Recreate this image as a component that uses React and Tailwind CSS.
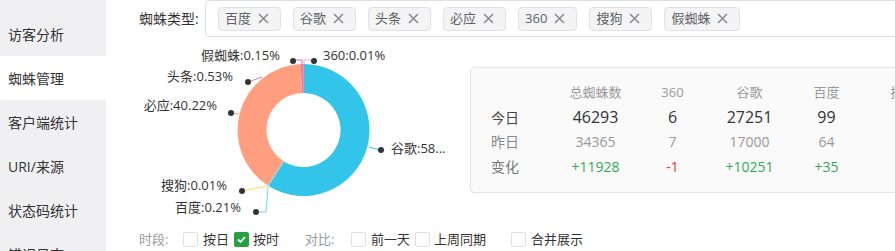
import React from "react";

const FONT = "font-['Open_Sans','Noto_Sans_CJK_SC',sans-serif]";

const navItems = ["访客分析", "蜘蛛管理", "客户端统计", "URI/来源", "状态码统计", "错误日志"];
const tags = ["百度", "谷歌", "头条", "必应", "360", "搜狗", "假蜘蛛"];

const slices = [
  { name: "360", v: 6, c: "#e690d1" },
  { name: "谷歌", v: 27251, c: "#32c5e9" },
  { name: "百度", v: 99, c: "#67e0e3" },
  { name: "搜狗", v: 4, c: "#ffdb5c" },
  { name: "必应", v: 18619, c: "#ff9f7f" },
  { name: "头条", v: 245, c: "#fb7293" },
  { name: "假蜘蛛", v: 69, c: "#e062ae" },
];

const CX = 303.5;
const CY = 130;
const RO = 66;
const RI = 37;

function pt(r, a) {
  return [CX + r * Math.sin(a), CY - r * Math.cos(a)];
}

function arcPath(a0, a1) {
  const large = a1 - a0 > Math.PI ? 1 : 0;
  const [x0, y0] = pt(RO, a0);
  const [x1, y1] = pt(RO, a1);
  const [x2, y2] = pt(RI, a1);
  const [x3, y3] = pt(RI, a0);
  return `M${x0} ${y0} A${RO} ${RO} 0 ${large} 1 ${x1} ${y1} L${x2} ${y2} A${RI} ${RI} 0 ${large} 0 ${x3} ${y3} Z`;
}

function Donut() {
  const total = slices.reduce((s, d) => s + d.v, 0);
  let acc = 0;
  const paths = slices.map((d) => {
    const a0 = (acc / total) * Math.PI * 2;
    acc += d.v;
    const a1 = (acc / total) * Math.PI * 2;
    return <path key={d.name} d={arcPath(a0, a1)} fill={d.c} />;
  });
  const dot = (x, y) => <circle cx={x} cy={y} r="3" fill="#333" />;
  return (
    <svg width="340" height="190" viewBox="130 37 340 190" className="block shrink-0">
      {paths}
      {/* label lines */}
      <polyline points="304,64 304,60 314,60" fill="none" stroke="#d9b3e6" strokeWidth="1" />
      <polyline points="302,64 302,60 293,60" fill="none" stroke="#e062ae" strokeWidth="1" />
      <polyline points="262,77 248,82" fill="none" stroke="#fb7293" strokeWidth="1" />
      <polyline points="239,114 231,113" fill="none" stroke="#ff9f7f" strokeWidth="1" />
      <polyline points="268,186 242,191" fill="none" stroke="#ffdb5c" strokeWidth="1" />
      <polyline points="268,187 266,212 256,212" fill="none" stroke="#67e0e3" strokeWidth="1" />
      <polyline points="369,147 376,149 381,150" fill="none" stroke="#32c5e9" strokeWidth="1" />
      {dot(314, 61)}
      {dot(293, 61)}
      {dot(248, 82)}
      {dot(231, 113)}
      {dot(242, 191)}
      {dot(256, 212)}
      {dot(381, 150)}
      <g fill="#333" fontSize="13" dominantBaseline="central">
        <text x="280" y="55" textAnchor="end">假蜘蛛:0.15%</text>
        <text x="323" y="55">360:0.01%</text>
        <text x="233" y="76" textAnchor="end">头条:0.53%</text>
        <text x="217" y="105" textAnchor="end">必应:40.22%</text>
        <text x="391" y="148">谷歌:58...</text>
        <text x="227" y="185" textAnchor="end">搜狗:0.01%</text>
        <text x="241" y="207" textAnchor="end">百度:0.21%</text>
      </g>
    </svg>
  );
}

function Tag({ label }) {
  return (
    <div className="flex h-[24px] shrink-0 items-center rounded-[4px] border border-[#e2e2e6] bg-[#f4f4f5] pl-[6px] pr-[10px] text-[13px] leading-none text-[#606266]">
      <span>{label}</span>
      <span className="ml-[5px] flex h-[14px] w-[14px] items-center justify-center">
        <svg width="11" height="11" viewBox="0 0 11 11">
          <path d="M1 1 L10 10 M10 1 L1 10" stroke="#8a8d93" strokeWidth="1.6" />
        </svg>
      </span>
    </div>
  );
}

function Box({ checked }) {
  if (checked) {
    return (
      <span className="flex h-[15px] w-[15px] shrink-0 items-center justify-center rounded-[2px] bg-[#2aa044]">
        <svg width="11" height="11" viewBox="0 0 11 11">
          <path d="M2 5.5 L4.5 8 L9 3" fill="none" stroke="#fff" strokeWidth="1.8" />
        </svg>
      </span>
    );
  }
  return <span className="h-[15px] w-[15px] shrink-0 rounded-[2px] border border-[#dcdfe6] bg-white" />;
}

const cols = [
  { h: "总蜘蛛数", t: "46293", y: "34365", d: "+11928", neg: false },
  { h: "360", t: "6", y: "7", d: "-1", neg: true },
  { h: "谷歌", t: "27251", y: "17000", d: "+10251", neg: false },
  { h: "百度", t: "99", y: "64", d: "+35", neg: false },
  { h: "搜狗", t: "4", y: "2", d: "+2", neg: false },
];

function StatCard() {
  return (
    <div className="mt-[30px] h-[126px] w-[520px] shrink-0 rounded-[4px] border border-[#e4e4e6] bg-[#fafafa] pt-[13px]">
      <div className="flex">
        <div className="w-[86px] shrink-0 pl-[20px]">
          <div className="h-[24px]" />
          <div className="flex h-[24px] items-center text-[14px] text-[#444]">今日</div>
          <div className="flex h-[25px] items-center text-[14px] text-[#888]">昨日</div>
          <div className="flex h-[25px] items-center text-[14px] text-[#777]">变化</div>
        </div>
        {cols.map((c) => (
          <div key={c.h} className="w-[77px] shrink-0 text-center">
            <div className="flex h-[24px] items-center justify-center text-[13px] text-[#999]">{c.h}</div>
            <div className="flex h-[24px] items-center justify-center text-[16px] text-[#333]">{c.t}</div>
            <div className="flex h-[25px] items-center justify-center text-[14px] text-[#999]">{c.y}</div>
            <div className={`flex h-[25px] items-center justify-center text-[14px] ${c.neg ? "text-[#f0302f]" : "text-[#34a853]"}`}>{c.d}</div>
          </div>
        ))}
      </div>
    </div>
  );
}

export default function App() {
  return (
    <div className={`flex h-[251px] w-[895px] overflow-hidden bg-white ${FONT}`}>
      <div className="w-[106px] shrink-0 bg-[#f0f0f2] pt-[12px]">
        {navItems.map((n) => (
          <div
            key={n}
            className={`flex h-[44px] items-center pl-[8px] text-[14px] text-[#333] ${n === "蜘蛛管理" ? "bg-white" : ""}`}
          >
            {n}
          </div>
        ))}
      </div>
      <div className="flex min-w-0 flex-1 flex-col pl-[24px]">
        <div className="flex h-[37px] shrink-0 items-center">
          <span className="ml-[9px] w-[66px] shrink-0 text-[14px] text-[#333]">蜘蛛类型:</span>
          <div className="flex h-[37px] w-[720px] shrink-0 items-center gap-[12px] rounded-[4px] border border-[#dcdfe6] pl-[12px]">
            {tags.map((t) => (
              <Tag key={t} label={t} />
            ))}
          </div>
        </div>
        <div className="flex h-[190px] shrink-0">
          <Donut />
          <StatCard />
        </div>
        <div className="flex h-[24px] items-center text-[13px] leading-none">
          <span className="ml-[9px] w-[44px] shrink-0 text-[#999]">时段:</span>
          <Box />
          <span className="ml-[5px] text-[#333]">按日</span>
          <span className="ml-[5px]" />
          <Box checked />
          <span className="ml-[4px] text-[#333]">按时</span>
          <span className="ml-[26px] w-[46px] shrink-0 text-[#999]">对比:</span>
          <Box />
          <span className="ml-[5px] text-[#333]">前一天</span>
          <span className="ml-[5px]" />
          <Box />
          <span className="ml-[4px] text-[#333]">上周同期</span>
          <span className="ml-[25px]" />
          <Box />
          <span className="ml-[5px] text-[#333]">合并展示</span>
        </div>
      </div>
    </div>
  );
}
